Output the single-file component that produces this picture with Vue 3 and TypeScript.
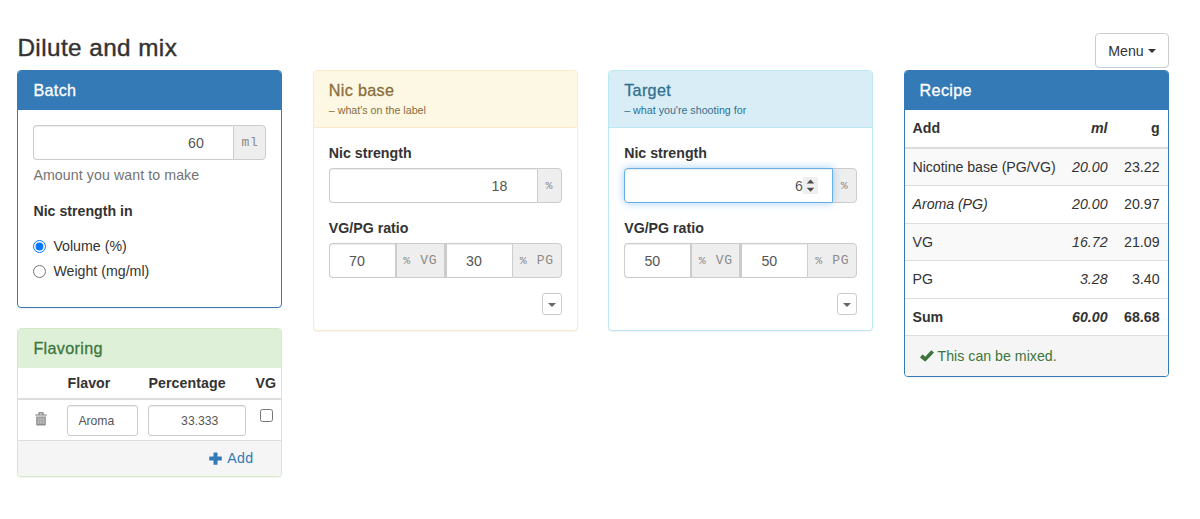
<script setup lang="ts">
import { computed, ref } from 'vue'

interface Mixture {
  id: string
  title: string
  note: string
  strength: string
  vg: string
  pg: string
  focused: boolean
}

interface Ingredient {
  name: string
  ml: string
  g: string
  flavor?: boolean
}

const amount = ref('60')
const unit = ref('volume')
const flavorName = ref('Aroma')
const flavorPercent = ref('33.333')
const flavorVg = ref(false)

const mixtures = ref<Mixture[]>([
  { id: 'base', title: 'Nic base', note: "– what's on the label", strength: '18', vg: '70', pg: '30', focused: false },
  { id: 'target', title: 'Target', note: "– what you're shooting for", strength: '6', vg: '50', pg: '50', focused: true },
])

const ingredients: Ingredient[] = [
  { name: 'Nicotine base (PG/VG)', ml: '20.00', g: '23.22' },
  { name: 'Aroma (PG)', ml: '20.00', g: '20.97', flavor: true },
  { name: 'VG', ml: '16.72', g: '21.09' },
  { name: 'PG', ml: '3.28', g: '3.40' },
]

const total = (key: 'ml' | 'g') => computed(() => ingredients.reduce((sum, item) => sum + Number(item[key]), 0).toFixed(2))
const totalMl = total('ml')
const totalG = total('g')
</script>

<template>
  <main class="page">
    <header class="top">
      <h1>Dilute and mix</h1>
      <button class="btn menu" type="button">Menu <i class="caret"></i></button>
    </header>

    <div class="columns">
      <div class="stack">
        <section class="panel primary batch">
          <h2 class="panel-heading">Batch</h2>
          <div class="panel-body">
            <div class="group">
              <input v-model="amount" class="control amount" aria-label="Amount" />
              <span class="addon unit">ml</span>
            </div>
            <p class="help">Amount you want to make</p>
            <p class="label unit-label">Nic strength in</p>
            <label class="radio"><input v-model="unit" type="radio" value="volume" /><span>Volume (%)</span></label>
            <label class="radio"><input v-model="unit" type="radio" value="weight" /><span>Weight (mg/ml)</span></label>
          </div>
        </section>

        <section class="panel success">
          <h2 class="panel-heading">Flavoring</h2>
          <div class="flavor-row flavor-head">
            <span></span><span>Flavor</span><span>Percentage</span><span>VG</span>
          </div>
          <div class="flavor-row flavor-item">
            <svg class="trash" viewBox="0 0 12 14" width="12" height="14" aria-label="Remove">
              <path d="M4 2.500V.9h4v1.600M.2 3h11.600" fill="none" stroke="#777" stroke-width="1.1" />
              <path d="M1.200 4.500h9.600v8q0 1-1 1H2.200q-1 0-1-1z" fill="#8c8c8c" />
              <path d="M3.200 5.500v6.500M5.100 5.500v6.500M7 5.500v6.500M8.900 5.500v6.500" fill="none" stroke="#ddd" stroke-width=".8" />
            </svg>
            <input v-model="flavorName" class="control small" aria-label="Flavor" />
            <input v-model="flavorPercent" class="control small percent" aria-label="Percentage" />
            <input v-model="flavorVg" class="check" type="checkbox" aria-label="VG" />
          </div>
          <div class="panel-footer add-footer">
            <a class="add">
              <svg viewBox="0 0 13 13" width="13" height="13"><path d="M5 .5h3a.5.5 0 0 1 .5.5v3.500h3.800a.5.5 0 0 1 .5.5v3a.5.5 0 0 1-.5.5H8.500v3.700a.5.5 0 0 1-.5.5H5a.5.5 0 0 1-.5-.5V8.500H.7a.5.5 0 0 1-.5-.5V5a.5.5 0 0 1 .5-.5h3.800V1A.5.5 0 0 1 5 .5z" fill="#337ab7" /></svg>
              <span>Add</span>
            </a>
          </div>
        </section>
      </div>

      <section v-for="mix in mixtures" :key="mix.id" class="panel mixture" :class="mix.id">
        <div class="panel-heading">
          <h2>{{ mix.title }}</h2>
          <small>{{ mix.note }}</small>
        </div>
        <div class="panel-body">
          <p class="label">Nic strength</p>
          <div class="group">
            <input v-model="mix.strength" class="control strength" :class="{ focused: mix.focused }" aria-label="Nic strength" />
            <span v-if="mix.focused" class="spinner">
              <svg viewBox="0 0 15 17" width="15" height="17"><path d="M3.700 6.600 7.500 2.600 11.300 6.600zM3.700 10.800 7.500 14.800 11.300 10.800z" fill="#4d4d4d" /></svg>
            </span>
            <span class="addon single">%</span>
          </div>
          <p class="label ratio-label">VG/PG ratio</p>
          <div class="group">
            <input v-model="mix.vg" class="control ratio" aria-label="VG" />
            <span class="addon middle"><span class="sign">%</span> VG</span>
            <input v-model="mix.pg" class="control ratio" aria-label="PG" />
            <span class="addon last"><span class="sign">%</span> PG</span>
          </div>
          <div class="more">
            <button class="btn tiny" type="button" aria-label="More"><i class="caret"></i></button>
          </div>
        </div>
      </section>

      <section class="panel primary">
        <h2 class="panel-heading">Recipe</h2>
        <table>
          <thead>
            <tr><th>Add</th><th class="ml">ml</th><th class="g">g</th></tr>
          </thead>
          <tbody>
            <tr v-for="item in ingredients" :key="item.name">
              <td :class="{ flavor: item.flavor }">{{ item.name }}</td>
              <td class="ml">{{ item.ml }}</td>
              <td class="g">{{ item.g }}</td>
            </tr>
            <tr class="sum"><td>Sum</td><td class="ml">{{ totalMl }}</td><td class="g">{{ totalG }}</td></tr>
          </tbody>
        </table>
        <div class="panel-footer status">
          <svg viewBox="0 0 14 12" width="14" height="12"><path d="M.3 6.900 2.300 4.700q.4-.4.8 0L5.200 6.700 11 .6q.4-.4.8 0l1.800 1.700q.4.400 0 .8L5.700 11.200q-.5.500-1 0L.3 7.700q-.4-.4 0-.8z" fill="#3c763d" /></svg>
          <span>This can be mixed.</span>
        </div>
      </section>
    </div>
  </main>
</template>

<style>
body {
  background: #fff;
}
</style>

<style scoped>
* {
  box-sizing: border-box;
}
.page {
  width: 1200px;
  height: 519px;
  padding: 33px 31px 0 17.4px;
  overflow: hidden;
  color: #333;
  font: 14.2px/20px "Helvetica Neue", "Liberation Sans", Arial, sans-serif;
}
h1,
h2,
p {
  margin: 0;
  font-weight: 400;
}
.top {
  display: flex;
  justify-content: space-between;
  height: 37px;
}
h1 {
  padding-top: 1px;
  font-size: 24.3px;
  line-height: 28px;
  letter-spacing: 0.42px;
  -webkit-text-stroke: 0.4px;
}
.btn {
  display: flex;
  align-items: center;
  justify-content: center;
  padding: 0;
  border: 1px solid #ccc;
  border-radius: 4px;
  background: #fff;
  color: #333;
  font: inherit;
}
.menu {
  width: 74px;
  height: 35px;
  gap: 4px;
}
.caret {
  border-top: 4px solid;
  border-left: 4px solid transparent;
  border-right: 4px solid transparent;
}
.columns {
  display: grid;
  grid-template-columns: repeat(4, 265px);
  column-gap: 30.4px;
  align-items: start;
}
.stack {
  display: grid;
  gap: 20px;
}
.panel {
  border: 1px solid;
  border-radius: 4px;
  background: #fff;
  box-shadow: 0 1px 1px rgba(0, 0, 0, 0.05);
  overflow: hidden;
}
.panel-heading {
  height: 39px;
  padding: 9px 15px 0;
}
h2 {
  font-size: 16.2px;
  line-height: 21px;
  letter-spacing: 0.32px;
  -webkit-text-stroke: 0.3px;
}
.primary {
  border-color: #337ab7;
}
.primary .panel-heading {
  background: #337ab7;
  color: #fff;
}
.success {
  border-color: #d6e9c6;
}
.success .panel-heading {
  background: #dff0d8;
  color: #3c763d;
}
.base {
  border-color: #faebcc;
}
.base .panel-heading {
  border-bottom: 1px solid #faebcc;
  background: #fcf8e3;
  color: #8a6d3b;
}
.target {
  border-color: #bce8f1;
}
.target .panel-heading {
  border-bottom: 1px solid #bce8f1;
  background: #d9edf7;
  color: #31708f;
}
.mixture .panel-heading {
  height: 57px;
}
.mixture h2 {
  height: 21px;
}
small {
  display: block;
  padding-top: 1px;
  font-size: 10.7px;
  line-height: 17px;
}
.panel-body {
  padding: 15px;
}
.batch {
  height: 238px;
}
.mixture {
  height: 261px;
}
.group {
  position: relative;
  display: flex;
  height: 35px;
}
.control {
  min-width: 0;
  height: 100%;
  margin: 0;
  border: 1px solid #ccc;
  border-radius: 4px;
  outline: none;
  background: #fff;
  box-shadow: inset 0 1px 1px rgba(0, 0, 0, 0.075);
  color: #555;
  font: inherit;
}
.group .control {
  border-right: 0;
  border-radius: 0;
}
.group .control:first-child {
  border-radius: 4px 0 0 4px;
}
.amount,
.strength {
  flex: 1;
  padding: 0 29.500px 0 12px;
  text-align: right;
}
.group .focused {
  z-index: 1;
  margin-right: -1px;
  padding-right: 29.400px;
  border: 1px solid #66afe9;
  box-shadow: inset 0 1px 1px rgba(0, 0, 0, 0.075), 0 0 8px rgba(102, 175, 233, 0.6);
}
.spinner {
  position: absolute;
  z-index: 2;
  top: 9px;
  right: 39px;
  width: 15px;
  height: 17px;
  background: #efefef;
}
.spinner svg,
.add svg,
.status svg {
  display: block;
}
.addon {
  display: flex;
  align-items: center;
  justify-content: center;
  padding-bottom: 1px;
  border: 1px solid #ccc;
  background: #eee;
  color: #8a8a8a;
  font: 13px "Courier New", "Liberation Mono", monospace;
  letter-spacing: 0.700px;
  white-space: pre;
}
.addon:last-child {
  border-radius: 0 4px 4px 0;
}
.unit {
  width: 33px;
}
.single {
  width: 25px;
  font-size: 11.500px;
}
.sign {
  margin-right: 0.900px;
  font-size: 11.500px;
}
.ratio {
  width: 66px;
  padding: 0 30px 0 0;
  text-align: right;
}
.middle {
  width: 51px;
  border-width: 1px 2px;
}
.last {
  flex: 1;
}
.label {
  font-weight: 700;
}
.mixture .label {
  height: 25px;
}
.mixture .ratio-label {
  height: 40px;
  padding-top: 15px;
}
.help {
  margin-top: 5px;
  color: #737373;
  letter-spacing: 0.080px;
}
.unit-label {
  margin: 16px 0 15px;
}
.radio {
  display: flex;
  align-items: center;
  height: 20px;
  margin-bottom: 5px;
}
.radio input {
  width: 13px;
  height: 13px;
  margin: 1px 7px 0 0;
  accent-color: #0b76ff;
}
.more {
  display: flex;
  justify-content: flex-end;
  margin-top: 15px;
}
.tiny {
  width: 20px;
  height: 22px;
  padding-top: 2px;
  border-radius: 3px;
  color: #666;
}
.flavor-row {
  display: grid;
  grid-template-columns: 49px 81px 107px 1fr;
}
.flavor-head {
  height: 32px;
  padding-top: 5px;
  border-bottom: 2px solid #ddd;
  font-weight: 700;
  letter-spacing: 0.080px;
}
.flavor-item {
  height: 40px;
  padding-top: 5px;
}
.trash {
  margin: 7px 0 0 16.600px;
}
.small {
  width: 71px;
  height: 31px;
  padding: 0 10px;
  border-radius: 3px;
  font-size: 12.2px;
}
.percent {
  width: 98px;
  padding-right: 27px;
  text-align: right;
}
.check {
  width: 13px;
  height: 13px;
  margin: 4px 0 0 5px;
}
.panel-footer {
  border-top: 1px solid #ddd;
  background: #f5f5f5;
}
.add-footer {
  display: flex;
  justify-content: flex-end;
  height: 36px;
  padding: 7px 28px 0 0;
}
.add {
  display: flex;
  align-items: center;
  gap: 5px;
  height: 20px;
  color: #337ab7;
  letter-spacing: 0.300px;
}
table {
  width: 100%;
  border-collapse: separate;
  border-spacing: 0;
  table-layout: fixed;
}
th,
td {
  height: 37.500px;
  padding: 0 8px;
  border-top: 1px solid #ddd;
  text-align: left;
  white-space: nowrap;
}
td:first-child {
  letter-spacing: -0.060px;
}
th {
  border-top: 0;
  border-bottom: 1px solid #ddd;
}
th:first-child {
  width: 159px;
}
.ml {
  padding: 0;
  text-align: right;
  font-style: italic;
}
th.ml {
  width: 44px;
}
.g {
  text-align: right;
}
tbody tr:nth-child(odd):not(.sum) {
  background: #f9f9f9;
}
.flavor {
  font-style: italic;
}
.sum {
  font-weight: 700;
}
.status {
  display: flex;
  align-items: center;
  gap: 4px;
  height: 41px;
  padding-left: 15px;
  color: #3c763d;
}
</style>
